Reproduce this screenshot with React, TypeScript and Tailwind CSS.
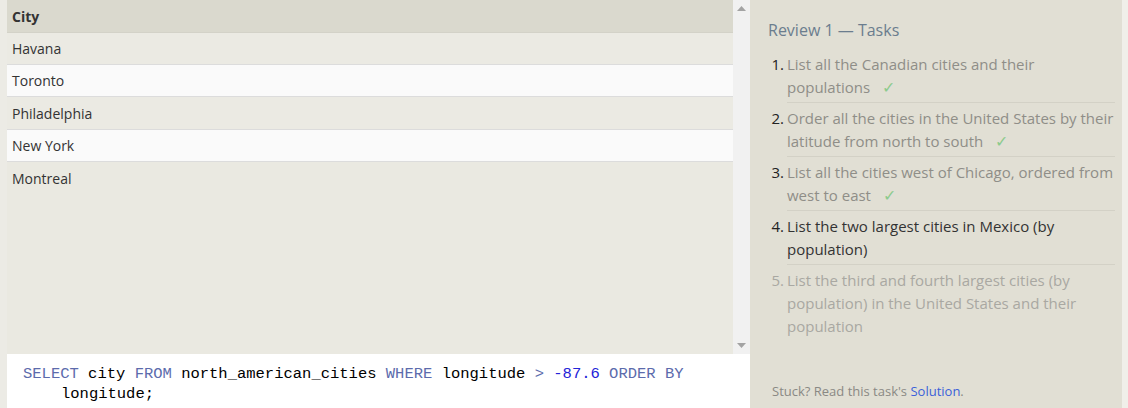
import React from "react";

const rows = [
  { name: "Havana", h: "h-[32px]", bg: "bg-[#ebeae3] border-b border-[#dcdcdc]" },
  { name: "Toronto", h: "h-[32px]", bg: "bg-[#fafafa] border-b border-[#dcdcdc]" },
  { name: "Philadelphia", h: "h-[33px]", bg: "bg-[#ebeae3] border-b border-[#dcdcdc]" },
  { name: "New York", h: "h-[32px]", bg: "bg-[#fafafa] border-b border-[#dcdcdc]" },
  { name: "Montreal", h: "h-[32px]", bg: "bg-[#eae9e1]" },
];

type Task = { text: string; state: "done" | "current" | "todo" };
const tasks: Task[] = [
  { text: "List all the Canadian cities and their populations", state: "done" },
  { text: "Order all the cities in the United States by their latitude from north to south", state: "done" },
  { text: "List all the cities west of Chicago, ordered from west to east", state: "done" },
  { text: "List the two largest cities in Mexico (by population)", state: "current" },
  { text: "List the third and fourth largest cities (by population) in the United States and their population", state: "todo" },
];

export default function App() {
  return (
    <div
      className="flex w-[1128px] h-[408px] overflow-hidden bg-[#f0efe9]"
      style={{ fontFamily: '"Open Sans", "Noto Sans", sans-serif' }}
    >
      {/* Left panel */}
      <div className="flex flex-col w-[750px] h-full bg-[#ecebe5] pl-[7px]">
        <div className="flex h-[354px]">
          <div className="flex-1 bg-[#eae9e1] text-[14px] text-[#333]">
            <div className="h-[33px] flex items-center pl-[5px] bg-[#dad9ce] border-b border-[#d3d2c8] font-bold">
              City
            </div>
            {rows.map((r) => (
              <div key={r.name} className={"flex items-center pl-[5px] " + r.h + " " + r.bg}>
                {r.name}
              </div>
            ))}
          </div>
          <div className="w-[17px] bg-[#f1f1f1] flex flex-col justify-between items-center py-[6px]">
            <svg width="9" height="5" viewBox="0 0 9 5">
              <polygon points="4.5,0 9,5 0,5" fill="#a3a3a3" />
            </svg>
            <svg width="9" height="5" viewBox="0 0 9 5">
              <polygon points="0,0 9,0 4.5,5" fill="#a3a3a3" />
            </svg>
          </div>
        </div>
        <div
          className="flex-1 bg-white pl-[16px] pt-[10px] text-[15.5px] leading-[20px] text-black"
          style={{ fontFamily: '"Liberation Mono", monospace' }}
        >
          <div className="whitespace-pre">
            <span className="text-[#5c6bac]">SELECT</span> city{" "}
            <span className="text-[#5c6bac]">FROM</span> north_american_cities{" "}
            <span className="text-[#5c6bac]">WHERE</span> longitude{" "}
            <span className="text-[#5c6bac]">&gt;</span>{" "}
            <span className="text-[#2424d8]">-87.6</span>{" "}
            <span className="text-[#5c6bac]">ORDER BY</span>
          </div>
          <div className="whitespace-pre pl-[38px]">longitude;</div>
        </div>
      </div>

      {/* Right panel */}
      <div className="flex flex-col w-[372px] h-full bg-[#e1dfd4] pl-[18px] pr-[7px]">
        <div className="text-[16px] text-[#6b7d8e] mt-[18px] leading-[24px]">Review 1 — Tasks</div>
        <ol className="mt-[7px] text-[15px] leading-[23px]">
          {tasks.map((t, i) => (
            <li key={i} className="flex">
              <span
                className={
                  t.state === "todo"
                    ? "w-[19px] shrink-0 text-right pr-[3px] pt-[4px] text-[#a9a8a2]"
                    : "w-[19px] shrink-0 text-right pr-[3px] pt-[4px] text-[#222]"
                }
              >
                {i + 1}.
              </span>
              <div
                className={
                  "flex-1 pt-[4px] pb-[3px] " +
                  (i < tasks.length - 1 ? "border-b border-[#d3d1c6] " : "") +
                  (t.state === "done"
                    ? "text-[#8f8e88]"
                    : t.state === "current"
                    ? "text-[#333]"
                    : "text-[#a9a8a2]")
                }
              >
                {t.text}
                {t.state === "done" && (
                  <span className="inline-block text-[#8dcb8d] ml-[12px] text-[16px] leading-[16px]">
                    ✓
                  </span>
                )}
              </div>
            </li>
          ))}
        </ol>
        <div className="mt-auto mb-[7px] text-[13px] text-[#8a8984] pl-[4px]">
          Stuck? Read this task's <span className="text-[#3b5fd9]">Solution</span>.
        </div>
      </div>
    </div>
  );
}
